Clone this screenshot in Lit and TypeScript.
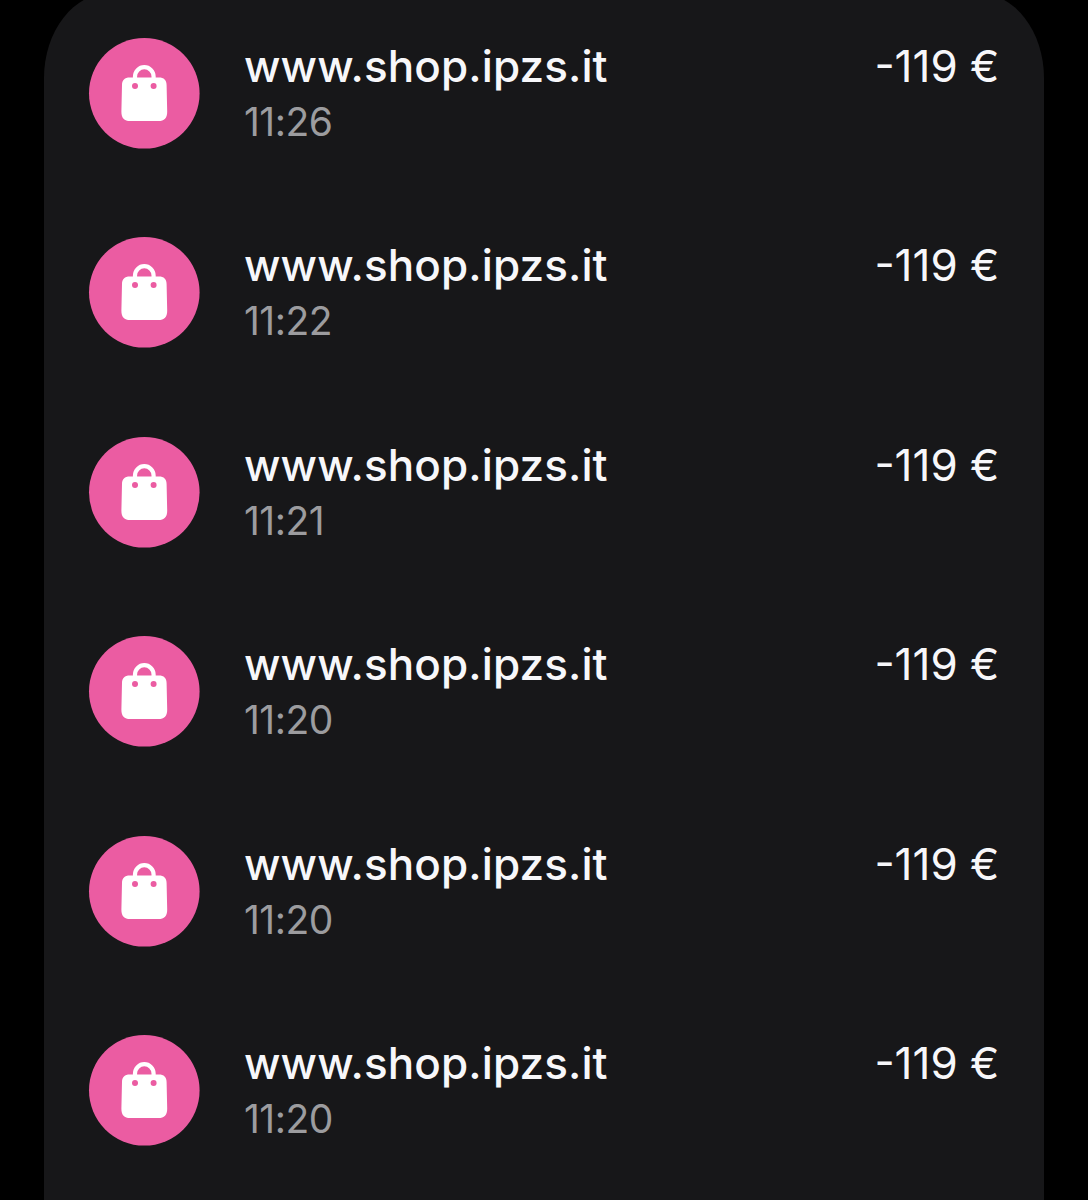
import { LitElement, html, css } from "lit";
import { customElement, property } from "lit/decorators.js";

interface Transaction {
  merchant: string;
  time: string;
  amount: string;
}

const TRANSACTIONS: Transaction[] = ["11:26", "11:22", "11:21", "11:20", "11:20", "11:20"].map(
  (time) => ({ merchant: "www.shop.ipzs.it", time, amount: "-119 €" })
);

@customElement("shopping-icon")
export class ShoppingIcon extends LitElement {
  static styles = css`
    :host {
      display: block;
      flex: none;
      width: 110.6px;
      height: 110.6px;
    }
    .icon {
      display: block;
      width: 100%;
      height: 100%;
      overflow: visible;
    }
    .disc {
      fill: #eb5ca2;
    }
    .body {
      fill: #fff;
    }
    .handle {
      fill: none;
      stroke: #fff;
      stroke-width: 4.2;
    }
  `;

  render() {
    return html`
      <svg class="icon" viewBox="0 0 110.6 110.6" aria-hidden="true">
        <circle class="disc" cx="55.3" cy="55.3" r="55.3" />
        <path class="handle" d="M46 41.5V38.5a9.3 9.3 0 0 1 18.6 0V41.5" />
        <path
          class="body"
          d="M40.8 39.4H69.8C75 39.4 77.5 42 77.6 47L78.2 73.4C78.3 80 75.3 83 69.4 83H41.2C35.3 83 32.3 80 32.4 73.4L33 47C33.1 42 35.6 39.4 40.8 39.4Z"
        />
        <circle class="disc" cx="46" cy="48" r="3" />
        <circle class="disc" cx="64.6" cy="48" r="3" />
      </svg>
    `;
  }
}

@customElement("transaction-row")
export class TransactionRow extends LitElement {
  @property({ attribute: false }) item!: Transaction;

  static styles = css`
    :host {
      display: flex;
      align-items: flex-start;
      height: 110.6px;
    }
    .details {
      flex: 1;
      margin-left: 44.8px;
    }
    .merchant,
    .amount {
      font-size: 44px;
      line-height: 56px;
      color: #f7f7fa;
      white-space: nowrap;
    }
    .merchant {
      font-weight: 500;
      letter-spacing: 0.1px;
    }
    .time {
      font-size: 39px;
      line-height: 56px;
      letter-spacing: -0.5px;
      color: #9c9c9f;
    }
  `;

  render() {
    const { merchant, time, amount } = this.item;
    return html`
      <shopping-icon></shopping-icon>
      <div class="details">
        <div class="merchant">${merchant}</div>
        <div class="time">${time}</div>
      </div>
      <div class="amount">${amount}</div>
    `;
  }
}

@customElement("app-root")
export class AppRoot extends LitElement {
  static styles = css`
    :host {
      display: block;
      box-sizing: border-box;
      height: 1200px;
      padding: 0 44px;
      overflow: hidden;
      background: #000;
      font-family: Inter, "Liberation Sans", sans-serif;
    }
    .card {
      display: flex;
      flex-direction: column;
      gap: 88.8px;
      box-sizing: border-box;
      height: 1300px;
      margin-top: -7px;
      padding: 45px 44.6px 0 44.6px;
      border-radius: 66px / 85px;
      background: #171719;
    }
  `;

  render() {
    return html`
      <div class="card">
        ${TRANSACTIONS.map((item) => html`<transaction-row .item=${item}></transaction-row>`)}
      </div>
    `;
  }
}
